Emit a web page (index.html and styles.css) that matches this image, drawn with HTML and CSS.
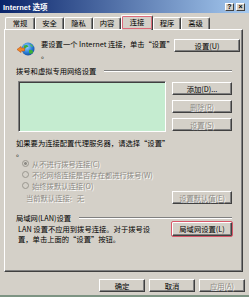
FILE: index.html
```html
<!DOCTYPE html>
<html lang="zh-CN">
<head>
  <meta charset="UTF-8">
  <title>Internet 选项</title>
  <link rel="stylesheet" href="styles.css">
</head>
<body>
  <div class="window">
    <div class="titlebar">
      <span class="title">Internet 选项</span>
      <div class="caption-btns">
        <span class="cap">?</span>
        <span class="cap">×</span>
      </div>
    </div>

    <div class="tabs">
      <span class="tab t30">常规</span>
      <span class="tab t29">安全</span>
      <span class="tab t29">隐私</span>
      <span class="tab t28">内容</span>
      <span class="tab active">连接</span>
      <span class="tab t28">程序</span>
      <span class="tab t29">高级</span>
    </div>

    <div class="panel">
      <div class="intro">
        <svg class="globe" width="19" height="17" viewBox="0 0 19 17">
          <defs>
            <radialGradient id="sea" cx="0.4" cy="0.35" r="0.7">
              <stop offset="0" stop-color="#9fd8ff"/>
              <stop offset="0.6" stop-color="#2a7fd8"/>
              <stop offset="1" stop-color="#134a9a"/>
            </radialGradient>
          </defs>
          <circle cx="12" cy="9" r="6.5" fill="url(#sea)"/>
          <path d="M8 5.5 C10 4.5 12 5 12.5 6.5 C11.5 7.5 10 7 9.5 8.5 C8.5 9 7.5 8 8 5.5 Z" fill="#3cae3a"/>
          <path d="M13 10 C15 9.5 17.5 10.5 17 12.5 C15.5 14.5 13.5 14 13 12.5 Z" fill="#3cae3a"/>
          <path d="M14 4 C15.5 4.5 16.5 5.5 17 7 C15.5 7 14.5 6 14 4 Z" fill="#5cc24a"/>
          <path d="M1 9.5 L5 6.5 L5 8 L8.5 8 L8.5 11 L5 11 L5 12.5 Z" fill="#f08a24" stroke="#c0501a" stroke-width="0.6"/>
        </svg>
        <p class="intro-text">要设置一个 Internet 连接，单击“设置”<br>。</p>
        <button class="btn btn-setup">设置(<u>U</u>)</button>
      </div>

      <div class="group-title"><span>拨号和虚拟专用网络设置</span></div>
      <div class="dialup">
        <div class="listbox"></div>
        <div class="btn-col">
          <button class="btn">添加(<u>D</u>)...</button>
          <button class="btn" disabled>删除(<u>R</u>)</button>
          <button class="btn" disabled>设置(<u>S</u>)</button>
        </div>
      </div>

      <p class="proxy-text">如果要为连接配置代理服务器，请选择“设置”<br>。</p>

      <div class="radios">
        <div class="radio-row"><span class="radio checked"></span>从不进行拨号连接(<u>C</u>)</div>
        <div class="radio-row"><span class="radio"></span>不论网络连接是否存在都进行拨号(<u>W</u>)</div>
        <div class="radio-row"><span class="radio"></span>始终拨默认连接(<u>O</u>)</div>
      </div>

      <div class="default-row">
        <span class="default-text">当前默认连接:&nbsp;&nbsp;&nbsp;无</span>
        <button class="btn" disabled>设置默认值(<u>E</u>)</button>
      </div>

      <div class="group-title lan-title"><span>局域网(LAN)设置</span></div>
      <div class="lan-row">
        <p class="lan-text">LAN 设置不应用到拨号连接。对于拨号设<br>置，单击上面的“设置”按钮。</p>
        <button class="btn focus">局域网设置(<u>L</u>)</button>
      </div>
    </div>

    <div class="footer">
      <button class="btn">确定</button>
      <button class="btn">取消</button>
      <button class="btn" disabled>应用(<u>A</u>)</button>
    </div>
  </div>
</body>
</html>
```

FILE: styles.css
```css
body {
  margin: 0;
  background-color: #d4d0c8;
  color: #000;
  font-family: "Noto Sans CJK SC", sans-serif;
  font-size: 7.3px;
}

p {
  margin: 0;
  white-space: nowrap;
}

u {
  text-decoration: none;
}

.window {
  width: 249px;
  height: 297px;
  box-sizing: border-box;
  background-color: #d4d0c8;
  border-bottom: 2px solid #7d9483;
  overflow: hidden;
}

/* title bar */
.titlebar {
  height: 13px;
  display: flex;
  align-items: center;
  justify-content: space-between;
  padding: 0 4px 0 3px;
  background: linear-gradient(to right, #0a246a, #a6caf0);
}

.title {
  color: #fff;
  font-family: "Liberation Sans", "Noto Sans CJK SC", sans-serif;
  font-weight: bold;
  font-size: 7.5px;
}

.caption-btns {
  display: flex;
  gap: 2px;
}

.cap {
  width: 9px;
  height: 8px;
  box-sizing: border-box;
  background-color: #d4d0c8;
  border: 1px solid;
  border-color: #fff #404040 #404040 #fff;
  font-family: "Liberation Sans", sans-serif;
  font-weight: bold;
  font-size: 7px;
  line-height: 6px;
  text-align: center;
}

/* tabs */
.tabs {
  height: 16px;
  display: flex;
  align-items: flex-end;
  padding-left: 5px;
}

.tab {
  height: 12px;
  box-sizing: border-box;
  border-top: 1px solid #fff;
  border-left: 1px solid #fff;
  border-right: 1px solid #404040;
  box-shadow: inset -1px 0 #808080;
  border-radius: 2px 2px 0 0;
  text-align: center;
  line-height: 11px;
}

.t28 { width: 28px; }
.t29 { width: 29px; }
.t30 { width: 30px; }

.tab.active {
  position: relative;
  z-index: 1;
  width: 32px;
  height: 15px;
  margin-bottom: -1px;
  background-color: #d4d0c8;
  line-height: 13px;
  outline: 1px solid #dc6b7a;
  outline-offset: -2px;
}

/* panel */
.panel {
  height: 243px;
  margin-left: 4px;
  width: 239px;
  box-sizing: border-box;
  border: 1px solid;
  border-color: #fff #404040 #404040 #fff;
  box-shadow: inset -1px -1px #808080;
  padding: 9px 10px 0 11px;
}

.btn {
  height: 13px;
  box-sizing: border-box;
  padding: 0;
  background-color: #d4d0c8;
  border: 1px solid;
  border-color: #fff #404040 #404040 #fff;
  box-shadow: inset -1px -1px #808080;
  font-family: inherit;
  font-size: 7.3px;
  line-height: 10px;
  color: #000;
}

.btn:disabled {
  color: #8c8a84;
  text-shadow: 1px 1px #fff;
}

.btn.focus {
  height: 14px;
  outline: 1px solid #d8586a;
  border-radius: 1px;
}

.intro {
  display: flex;
  align-items: flex-start;
  height: 22px;
}

.globe {
  margin-top: 1px;
  flex-shrink: 0;
}

.intro-text {
  flex: 1;
  min-width: 0;
  margin-left: 6px;
  line-height: 10.5px;
}

.btn-setup {
  flex-shrink: 0;
  width: 66px;
  margin-right: -8px;
  margin-left: 2px;
}

.group-title {
  display: flex;
  align-items: center;
  height: 10px;
  margin-top: 5px;
  line-height: 10px;
}

.group-title::after {
  content: "";
  flex: 1;
  margin-left: 8px;
  border-top: 1px solid #808080;
  border-bottom: 1px solid #fff;
}

.dialup {
  display: flex;
  margin-top: 5px;
}

.listbox {
  width: 148px;
  height: 51px;
  margin-left: 2px;
  box-sizing: border-box;
  background-color: #c5ecd0;
  border: 1px solid;
  border-color: #808080 #fff #fff #808080;
  box-shadow: inset 1px 1px #404040;
}

.btn-col {
  margin-left: auto;
  width: 60px;
  padding-top: 1px;
  display: flex;
  flex-direction: column;
  gap: 5px;
}

.proxy-text {
  margin-top: 6px;
  line-height: 10px;
}

.radios {
  padding-left: 6px;
  color: #8c8a84;
  text-shadow: 1px 1px #fff;
}

.radio-row {
  display: flex;
  align-items: center;
  height: 11px;
}

.radio {
  width: 7px;
  height: 7px;
  box-sizing: border-box;
  margin-right: 3px;
  border-radius: 50%;
  border: 1px solid #9a978f;
  background-color: #d4d0c8;
  text-shadow: none;
}

.radio.checked {
  background: radial-gradient(circle, #8c8a84 1.2px, #d4d0c8 1.6px);
}

.default-row {
  display: flex;
  align-items: center;
}

.default-text {
  padding-left: 10px;
  color: #8c8a84;
  text-shadow: 1px 1px #fff;
}

.default-row .btn {
  margin-left: auto;
  width: 60px;
}

.lan-title {
  margin-top: 9px;
}

.lan-row {
  display: flex;
  align-items: flex-start;
  margin-top: -1px;
}

.lan-text {
  padding: 2px 0 0 2px;
  line-height: 10px;
}

.lan-row .btn {
  margin-left: auto;
  width: 60px;
}

/* bottom buttons */
.footer {
  display: flex;
  justify-content: flex-end;
  gap: 4px;
  margin-top: 7px;
  padding-right: 4px;
}

.footer .btn {
  width: 46px;
}
```
